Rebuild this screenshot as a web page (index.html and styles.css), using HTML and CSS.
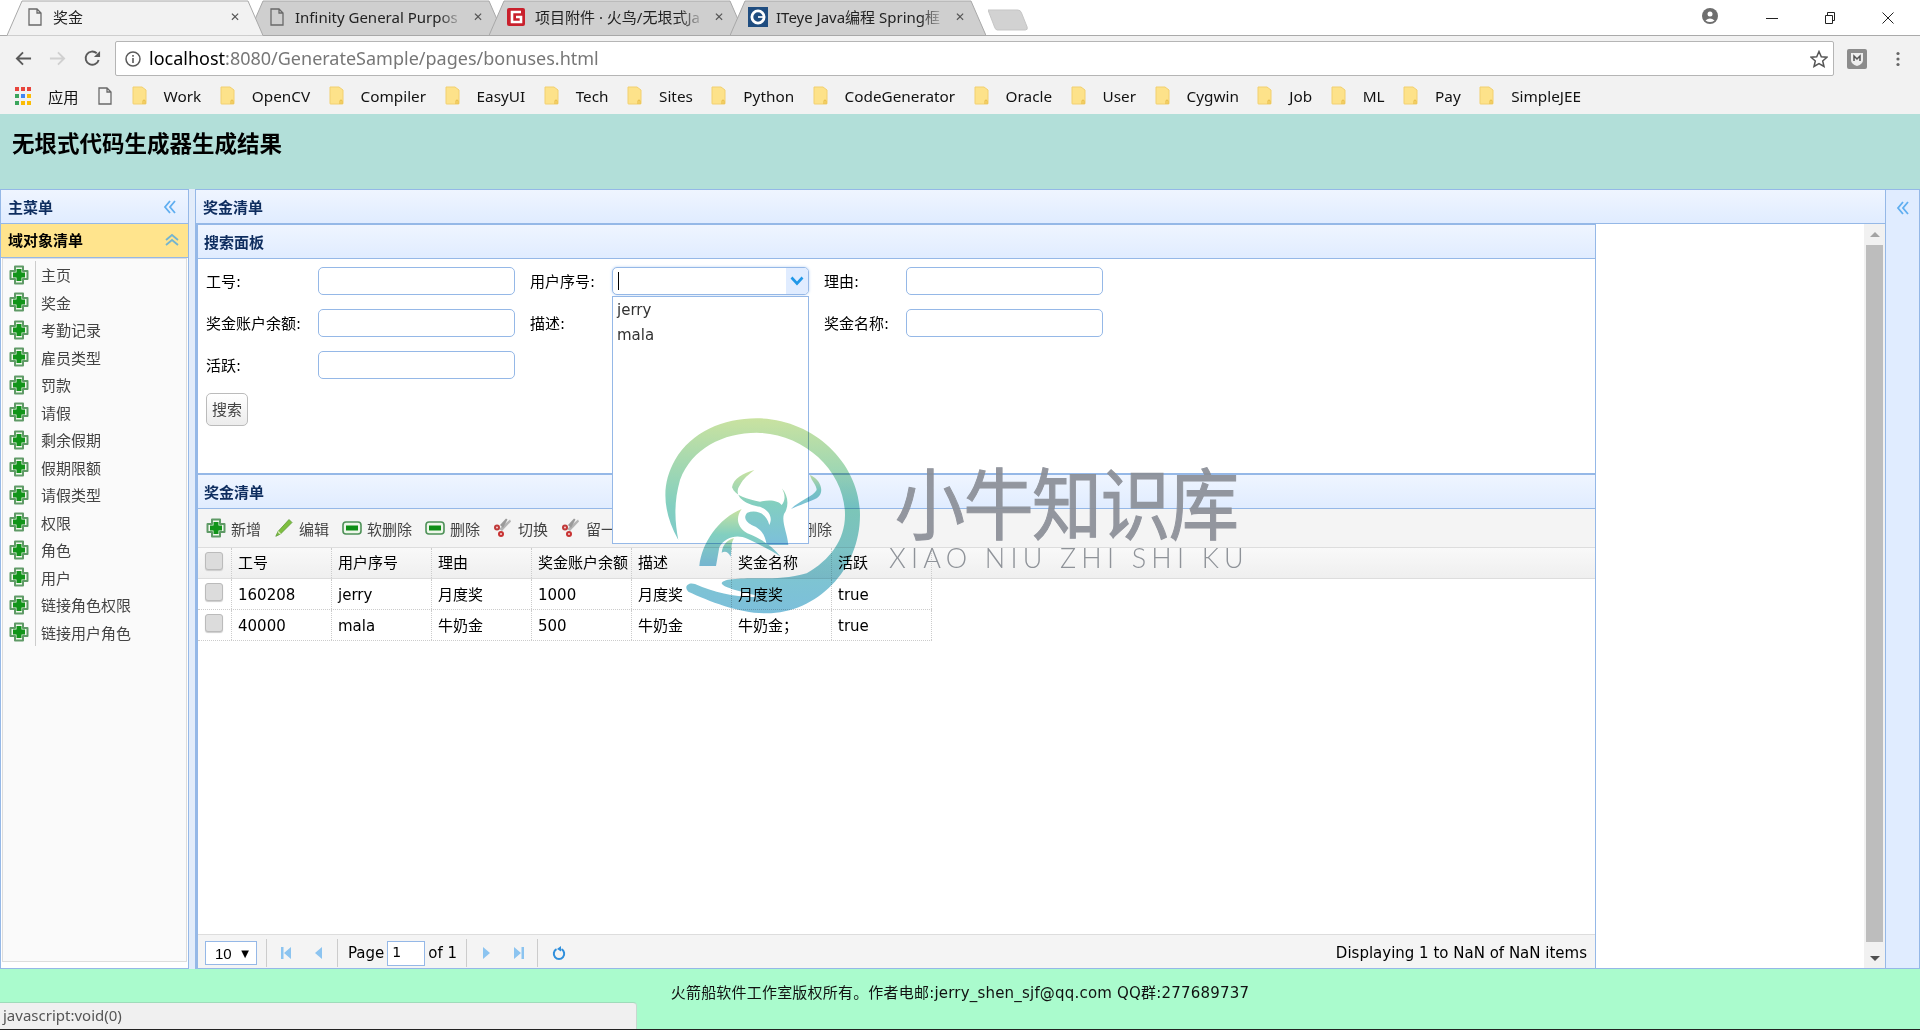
FILE: index.html
```html
<!DOCTYPE html>
<html lang="zh">
<head>
<meta charset="utf-8">
<title>奖金</title>
<link rel="stylesheet" href="styles.css">
</head>
<body>
<svg class="defs" width="0" height="0" aria-hidden="true">
  <defs>
    <symbol id="i-plus" viewBox="0 0 20 20">
      <path d="M6 1.500h8v4.500h4.500v8H14v4.500H6V14H1.500V6H6z" fill="#f2f8ee" stroke="#5f9a66" stroke-width="2" stroke-linejoin="round"/>
      <path d="M10 4v12M4 10h12" stroke="#12941a" stroke-width="5" fill="none"/>
    </symbol>
    <symbol id="i-minus" viewBox="0 0 20 20">
      <rect x="1" y="4" width="18" height="12" rx="3" fill="#eef6ea" stroke="#4e9158" stroke-width="1.600"/>
      <rect x="4" y="7.500" width="12" height="5" fill="#0e8f16"/>
    </symbol>
    <symbol id="i-pencil" viewBox="0 0 20 20">
      <path d="M15 1.500l3 3L6.500 16 1.800 18.300 4 13.500z" fill="#7fbf3f" stroke="#5c9a3a" stroke-width=".8"/>
      <path d="M4 13.500l2.500 2.500" stroke="#d8e8b8" stroke-width="1.500"/>
    </symbol>
    <symbol id="i-scissors" viewBox="0 0 20 20">
      <path d="M6 11L17 1.500l1 2L9 13z" fill="#b4b4b4"/>
      <path d="M7 7l6-6.500 1.500 1L10 10 z" fill="#9a9a9a"/>
      <circle cx="4" cy="9.500" r="3" fill="#c03a3a"/>
      <circle cx="8" cy="16" r="3" fill="#c83232"/>
      <circle cx="4" cy="9.500" r="1" fill="#f4d4d4"/>
      <circle cx="8" cy="16" r="1" fill="#f4d4d4"/>
    </symbol>
    <symbol id="i-page" viewBox="0 0 14 18">
      <path d="M1 1h8l4 4v12H1z M9 1v4h4" fill="none" stroke="#6a6a6a" stroke-width="1.300"/>
    </symbol>
    <symbol id="i-folder" viewBox="0 0 15 19">
      <path d="M1 1h9l4 3v13.500q0 .5-.5.500H1.500q-.5 0-.5-.5z" fill="#fde28a" stroke="#f2d070" stroke-width="1"/>
      <path d="M11 18v-3q0-1 1-1t1 1v3" fill="none" stroke="#e6b93e" stroke-width="1"/>
    </symbol>
    <symbol id="i-dbl-left" viewBox="0 0 14 14">
      <path d="M7 1L2 7l5 6M12 1L7 7l5 6" fill="none" stroke="#5faef0" stroke-width="1.800"/>
    </symbol>
    <symbol id="i-dbl-up" viewBox="0 0 14 14">
      <path d="M1 7l6-5 6 5M1 12l6-5 6 5" fill="none" stroke="#74b4cf" stroke-width="1.800"/>
    </symbol>
  </defs>
</svg>

<div class="tabstrip">
  <div class="tab tab-active">
    <svg class="tab-shape" viewBox="0 0 256 36" preserveAspectRatio="none"><path d="M0 35.500L15 1h226l15 34.500"/></svg>
    <svg class="tab-icon"><use href="#i-page"/></svg>
    <span class="tab-title">奖金</span>
    <span class="tab-close">✕</span>
  </div>
  <div class="tab">
    <svg class="tab-shape" viewBox="0 0 256 36" preserveAspectRatio="none"><path d="M0 35.500L15 1h226l15 34.500z"/></svg>
    <svg class="tab-icon"><use href="#i-page"/></svg>
    <span class="tab-title tab-fade">Infinity General Purpos</span>
    <span class="tab-close">✕</span>
  </div>
  <div class="tab tab-narrow">
    <svg class="tab-shape" viewBox="0 0 256 36" preserveAspectRatio="none"><path d="M0 35.500L15 1h226l15 34.500z"/></svg>
    <svg class="fav" viewBox="0 0 18 18"><rect width="18" height="18" rx="2" fill="#c9202c"/><path d="M14 4H5v10h9V9H9" fill="none" stroke="#fff" stroke-width="2.600"/></svg>
    <span class="tab-title tab-fade">项目附件 · 火鸟/无垠式Ja</span>
    <span class="tab-close">✕</span>
  </div>
  <div class="tab tab-narrow">
    <svg class="tab-shape" viewBox="0 0 256 36" preserveAspectRatio="none"><path d="M0 35.500L15 1h226l15 34.500z"/></svg>
    <svg class="fav fav-wide" viewBox="0 0 18 18"><rect width="18" height="18" fill="#1f4d80"/><circle cx="9" cy="9" r="5.500" fill="none" stroke="#fff" stroke-width="2.500"/><path d="M9 9h6" stroke="#fff" stroke-width="1.500"/></svg>
    <span class="tab-title tab-fade">ITeye Java编程 Spring框</span>
    <span class="tab-close">✕</span>
  </div>
  <svg class="newtab" viewBox="0 0 44 22" preserveAspectRatio="none"><path d="M0 1h32q3 0 4 3l6 14q1 3-2 3H10q-2 0-3-3z" fill="#d2d2d2" stroke="#c4c4c4"/></svg>
  <div class="win">
    <svg class="win-user" viewBox="0 0 16 16"><circle cx="8" cy="8" r="8" fill="#6e6e6e"/><circle cx="8" cy="6" r="2.500" fill="#fff"/><path d="M3.500 12.500q4.500-4 9 0q-4.500 3-9 0z" fill="#fff"/></svg>
    <svg class="win-btn" viewBox="0 0 12 12"><path d="M0 6.500h12" stroke="#222" fill="none"/></svg>
    <svg class="win-btn" viewBox="0 0 12 12"><path d="M1.500 3.500h7v8h-7zM3.500 3.500v-3h7v8h-2" stroke="#222" fill="none"/></svg>
    <svg class="win-btn" viewBox="0 0 12 12"><path d="M.5.500l11 11M11.500.500l-11 11" stroke="#222" fill="none"/></svg>
  </div>
</div>

<div class="toolbar">
  <svg class="nav nav-back" viewBox="0 0 18 18"><path d="M17 9H2M8.500 2.500L2 9l6.500 6.500" fill="none" stroke="#5a5a5a" stroke-width="2"/></svg>
  <svg class="nav nav-fwd" viewBox="0 0 18 18"><path d="M1 9h15M9.500 2.500L16 9l-6.500 6.500" fill="none" stroke="#d0d0d0" stroke-width="2"/></svg>
  <svg class="nav nav-reload" viewBox="0 0 18 18"><path d="M15.500 10.500A7 7 0 1 1 13.500 3.500" fill="none" stroke="#5a5a5a" stroke-width="2"/><path d="M10.500 7.500H17V1z" fill="#5a5a5a"/></svg>
  <div class="omnibox">
    <svg class="info" viewBox="0 0 16 16"><circle cx="8" cy="8" r="7" fill="none" stroke="#5a5a5a" stroke-width="1.500"/><path d="M8 7v5M8 4v1.800" stroke="#5a5a5a" stroke-width="1.600"/></svg>
    <span class="url"><b class="host">localhost</b>:8080/GenerateSample/pages/bonuses.html</span>
    <svg class="star" viewBox="0 0 18 18"><path d="M9 1.500l2.300 5.200 5.700.5-4.300 3.800 1.300 5.500L9 13.600l-5 2.900 1.300-5.500L1 7.200l5.700-.5z" fill="none" stroke="#555" stroke-width="1.500"/></svg>
  </div>
  <svg class="ext" viewBox="0 0 20 20"><rect width="20" height="20" rx="2" fill="#8c8c8c"/><path d="M4 4h12v7q0 4-6 6-6-2-6-6z" fill="#eee"/><path d="M7 12V7l3 3 3-3v5" fill="none" stroke="#555" stroke-width="1.500"/></svg>
  <svg class="menu-dots" viewBox="0 0 4 16"><circle cx="2" cy="2.500" r="1.600"/><circle cx="2" cy="8" r="1.600"/><circle cx="2" cy="13.500" r="1.600"/></svg>
</div>

<div class="bookmarks">
  <svg class="apps" viewBox="0 0 16 18">
    <rect x="0" y="0" width="4" height="4" fill="#e8453c"/><rect x="6" y="0" width="4" height="4" fill="#e8453c"/><rect x="12" y="0" width="4" height="4" fill="#e8453c"/>
    <rect x="0" y="7" width="4" height="4" fill="#3ba55c"/><rect x="6" y="7" width="4" height="4" fill="#4285f4"/><rect x="12" y="7" width="4" height="4" fill="#fbbc05"/>
    <rect x="0" y="14" width="4" height="4" fill="#3ba55c"/><rect x="6" y="14" width="4" height="4" fill="#fbbc05"/><rect x="12" y="14" width="4" height="4" fill="#fbbc05"/>
  </svg>
  <span class="bm-apps">应用</span>
  <svg class="bm-page"><use href="#i-page"/></svg>
  <span class="bm"><svg class="bm-folder"><use href="#i-folder"/></svg>Work</span>
  <span class="bm"><svg class="bm-folder"><use href="#i-folder"/></svg>OpenCV</span>
  <span class="bm"><svg class="bm-folder"><use href="#i-folder"/></svg>Compiler</span>
  <span class="bm"><svg class="bm-folder"><use href="#i-folder"/></svg>EasyUI</span>
  <span class="bm"><svg class="bm-folder"><use href="#i-folder"/></svg>Tech</span>
  <span class="bm"><svg class="bm-folder"><use href="#i-folder"/></svg>Sites</span>
  <span class="bm"><svg class="bm-folder"><use href="#i-folder"/></svg>Python</span>
  <span class="bm"><svg class="bm-folder"><use href="#i-folder"/></svg>CodeGenerator</span>
  <span class="bm"><svg class="bm-folder"><use href="#i-folder"/></svg>Oracle</span>
  <span class="bm"><svg class="bm-folder"><use href="#i-folder"/></svg>User</span>
  <span class="bm"><svg class="bm-folder"><use href="#i-folder"/></svg>Cygwin</span>
  <span class="bm"><svg class="bm-folder"><use href="#i-folder"/></svg>Job</span>
  <span class="bm"><svg class="bm-folder"><use href="#i-folder"/></svg>ML</span>
  <span class="bm"><svg class="bm-folder"><use href="#i-folder"/></svg>Pay</span>
  <span class="bm"><svg class="bm-folder"><use href="#i-folder"/></svg>SimpleJEE</span>
</div>

<header class="app-header"><h1>无垠式代码生成器生成结果</h1></header>

<div class="layout">
  <aside class="west">
    <div class="panel-head west-head"><span class="title">主菜单</span><svg class="chev"><use href="#i-dbl-left"/></svg></div>
    <div class="panel-head gold-head"><span class="title">域对象清单</span><svg class="chev-up"><use href="#i-dbl-up"/></svg></div>
    <div class="west-body">
      <ul class="tree">
        <li><span class="tree-ico"><svg class="ico"><use href="#i-plus"/></svg></span>主页</li>
        <li><span class="tree-ico"><svg class="ico"><use href="#i-plus"/></svg></span>奖金</li>
        <li><span class="tree-ico"><svg class="ico"><use href="#i-plus"/></svg></span>考勤记录</li>
        <li><span class="tree-ico"><svg class="ico"><use href="#i-plus"/></svg></span>雇员类型</li>
        <li><span class="tree-ico"><svg class="ico"><use href="#i-plus"/></svg></span>罚款</li>
        <li><span class="tree-ico"><svg class="ico"><use href="#i-plus"/></svg></span>请假</li>
        <li><span class="tree-ico"><svg class="ico"><use href="#i-plus"/></svg></span>剩余假期</li>
        <li><span class="tree-ico"><svg class="ico"><use href="#i-plus"/></svg></span>假期限额</li>
        <li><span class="tree-ico"><svg class="ico"><use href="#i-plus"/></svg></span>请假类型</li>
        <li><span class="tree-ico"><svg class="ico"><use href="#i-plus"/></svg></span>权限</li>
        <li><span class="tree-ico"><svg class="ico"><use href="#i-plus"/></svg></span>角色</li>
        <li><span class="tree-ico"><svg class="ico"><use href="#i-plus"/></svg></span>用户</li>
        <li><span class="tree-ico"><svg class="ico"><use href="#i-plus"/></svg></span>链接角色权限</li>
        <li><span class="tree-ico"><svg class="ico"><use href="#i-plus"/></svg></span>链接用户角色</li>
      </ul>
    </div>
  </aside>

  <main class="center">
    <div class="panel-head center-head"><span class="title">奖金清单</span></div>
    <div class="center-body">
      <div class="main-col">
        <section class="search">
          <div class="panel-head sub-head"><span class="title">搜索面板</span></div>
          <form class="search-form">
            <div class="form-grid">
              <label class="col-1">工号:</label><input class="field" type="text">
              <label class="col-2">用户序号:</label>
              <div class="combo">
                <span class="caret"></span>
                <span class="combo-arrow"><svg class="combo-chev" viewBox="0 0 14 10"><path d="M1.500 1.500L7 7.500l5.500-6" fill="none" stroke="#2098e8" stroke-width="2.600"/></svg></span>
                <ul class="dropdown"><li>jerry</li><li>mala</li></ul>
              </div>
              <label class="col-3">理由:</label><input class="field" type="text">
              <label class="col-1">奖金账户余额:</label><input class="field" type="text">
              <label class="col-2">描述:</label><span></span>
              <label class="col-3">奖金名称:</label><input class="field" type="text">
              <label class="col-1">活跃:</label><input class="field" type="text">
            </div>
            <button class="search-btn" type="button">搜索</button>
          </form>
        </section>
        <section class="list">
          <div class="panel-head sub-head"><span class="title">奖金清单</span></div>
          <div class="grid-tools">
            <span class="tool"><svg class="ico"><use href="#i-plus"/></svg>新增</span>
            <span class="tool"><svg class="ico"><use href="#i-pencil"/></svg>编辑</span>
            <span class="tool"><svg class="ico"><use href="#i-minus"/></svg>软删除</span>
            <span class="tool"><svg class="ico"><use href="#i-minus"/></svg>删除</span>
            <span class="tool"><svg class="ico"><use href="#i-scissors"/></svg>切换</span>
            <span class="tool"><svg class="ico"><use href="#i-scissors"/></svg>留一</span>
            <span class="tool tool-far"><svg class="ico"><use href="#i-minus"/></svg>删除</span>
          </div>
          <div class="grid-head">
            <div class="cell cell-check"><span class="check"></span></div>
            <div class="cell">工号</div><div class="cell">用户序号</div><div class="cell">理由</div><div class="cell">奖金账户余额</div><div class="cell">描述</div><div class="cell">奖金名称</div><div class="cell">活跃</div>
          </div>
          <div class="grid-body">
            <div class="grid-row">
              <div class="cell cell-check"><span class="check"></span></div>
              <div class="cell">160208</div><div class="cell">jerry</div><div class="cell">月度奖</div><div class="cell">1000</div><div class="cell">月度奖</div><div class="cell">月度奖</div><div class="cell">true</div>
            </div>
            <div class="grid-row">
              <div class="cell cell-check"><span class="check"></span></div>
              <div class="cell">40000</div><div class="cell">mala</div><div class="cell">牛奶金</div><div class="cell">500</div><div class="cell">牛奶金</div><div class="cell">牛奶金；</div><div class="cell">true</div>
            </div>
          </div>
          <div class="pager">
            <div class="page-size"><span>10</span><span class="tri">▼</span></div>
            <i class="sep"></i>
            <svg class="pg" viewBox="0 0 12 14"><path d="M1 1h2.500v12H1zM11 1v12L4 7z" fill="#8cc4f0"/></svg>
            <svg class="pg" viewBox="0 0 12 14"><path d="M9 1v12L2 7z" fill="#8cc4f0"/></svg>
            <i class="sep"></i>
            <span class="pg-label">Page</span><span class="pg-input">1</span><span class="pg-of">of 1</span>
            <i class="sep"></i>
            <svg class="pg" viewBox="0 0 12 14"><path d="M3 1v12l7-6z" fill="#8cc4f0"/></svg>
            <svg class="pg" viewBox="0 0 12 14"><path d="M1 1v12l7-6zM8.500 1H11v12H8.500z" fill="#8cc4f0"/></svg>
            <i class="sep"></i>
            <svg class="pg pg-refresh" viewBox="0 0 14 14"><path d="M4.500 3.200A5.200 5.200 0 1 0 9.500 3.200" fill="none" stroke="#2f8fdc" stroke-width="2"/><path d="M6 0v5.500L2 3z" fill="#2f8fdc" transform="translate(3 0)"/></svg>
            <span class="pg-info">Displaying 1 to NaN of NaN items</span>
          </div>
        </section>
      </div>
      <div class="blank"></div>
      <div class="scrollbar">
        <span class="sb-up"></span>
        <span class="sb-thumb"></span>
        <span class="sb-down"></span>
      </div>
    </div>
  </main>

  <aside class="east"><svg class="chev-east"><use href="#i-dbl-left"/></svg></aside>
</div>

<footer class="app-footer">火箭船软件工作室版权所有。作者电邮:jerry_shen_sjf@qq.com QQ群:277689737</footer>

<div class="status">javascript:void(0)</div>

<div class="watermark">
  <svg class="wm-logo" viewBox="0 0 660 630">
    <defs>
      <linearGradient id="wm" x1="0" y1="0" x2="0" y2="1">
        <stop offset="0" stop-color="#c9e2a0"/>
        <stop offset=".45" stop-color="#82cfc0"/>
        <stop offset="1" stop-color="#7cbfdb"/>
      </linearGradient>
    </defs>
    <g fill="url(#wm)">
      <path d="M55 390C5 300 5 220 45 150C95 65 190 25 290 25C460 25 600 160 600 315C600 480 470 610 320 610C240 610 150 575 85 545C70 530 85 515 105 522C170 550 240 565 300 560C250 545 190 535 185 520C190 505 250 505 300 505C340 505 390 505 440 490C510 450 555 390 555 315C555 180 430 70 290 68C190 68 95 115 60 210C40 280 45 340 55 390Z"/>
      <path d="M283 180C250 190 220 205 216 232C225 258 262 268 300 275C330 268 355 272 365 285C378 270 375 250 365 235C385 255 388 290 372 312C364 335 382 370 385 405L320 405C315 370 300 355 275 345C255 335 250 320 262 308C285 300 318 305 328 345C340 320 325 300 300 290C262 285 215 260 240 225C250 205 265 195 283 180Z"/>
      <path d="M118 468C125 400 175 325 245 297C228 320 228 350 262 370C300 385 335 405 362 440C330 418 290 400 262 386C232 372 195 380 178 412L168 468Z"/>
      <path d="M450 195C485 210 495 250 470 265C450 275 420 285 393 297C420 270 460 260 470 240C470 225 455 215 450 195Z"/>
      <path d="M185 428C188 402 205 388 222 385C212 400 216 415 212 440C205 425 195 422 185 428Z"/>
    </g>
  </svg>
  <span class="wm-cn">小牛知识库</span>
  <span class="wm-en">XIAO NIU ZHI SHI KU</span>
</div>
</body>
</html>
```

FILE: styles.css
```css
* { box-sizing: border-box; }
html, body { margin: 0; padding: 0; }
body {
  width: 1920px;
  height: 1030px;
  overflow: hidden;
  position: relative;
  display: flex;
  flex-direction: column;
  background: #fff;
  font-family: "DejaVu Sans", "Noto Sans CJK SC", sans-serif;
  font-size: 15px;
  color: #000;
}
.defs { position: absolute; }

/* browser chrome */
.tabstrip {
  height: 36px;
  flex: none;
  display: flex;
  padding-left: 7px;
  border-bottom: 1px solid #aaa;
  font-family: "Noto Sans", "Noto Sans CJK SC", sans-serif;
  font-size: 15px;
  position: relative;
}
.tab {
  width: 256px;
  height: 36px;
  margin-right: -15px;
  padding: 0 20px 3px 22px;
  display: flex;
  align-items: center;
  position: relative;
  flex: none;
}
.tab-shape { position: absolute; left: 0; top: 0; width: 100%; height: 100%; z-index: 0; }
.tab-shape path { fill: #cfcfcf; stroke: #a8a8a8; stroke-width: 1; }
.tab-active { z-index: 2; padding: 0 22px 3px 21px; }
.tab-active .tab-shape path { fill: #f2f2f2; }
.tab-narrow { padding-left: 18px; }
.tab-icon, .tab-title, .tab-close, .fav { position: relative; z-index: 1; }
.tab-icon { width: 14px; height: 18px; margin-right: 11px; flex: none; }
.fav { width: 18px; height: 18px; margin-right: 10px; flex: none; }
.fav-wide { width: 20px; height: 20px; margin-right: 8px; }
.tab-title { flex: 1; white-space: nowrap; overflow: hidden; color: #222; }
.tab-fade { -webkit-mask-image: linear-gradient(90deg, #000 85%, transparent); mask-image: linear-gradient(90deg, #000 85%, transparent); }
.tab-close { width: 12px; margin-left: 8px; font-size: 12px; color: #555; flex: none; text-align: center; }
.newtab { width: 41px; height: 22px; margin: 9px 0 0 17px; flex: none; }
.win { margin-left: auto; display: flex; align-items: flex-start; padding: 8px 26px 0 0; }
.win-user { width: 16px; height: 16px; margin-right: 48px; }
.win-btn { width: 12px; height: 12px; margin: 4px 46px 0 0; }
.win-btn:last-child { margin-right: 0; }

.toolbar {
  height: 41px;
  flex: none;
  background: #f2f2f2;
  display: flex;
  align-items: center;
  padding: 4px 0 0 15px;
}
.nav { width: 17px; height: 17px; flex: none; }
.nav-back { margin-right: 17px; }
.nav-fwd { margin-right: 18px; }
.nav-reload { margin-right: 14px; }
.omnibox {
  width: 1719px;
  height: 35px;
  background: #fff;
  border: 1px solid #b5b5b5;
  border-radius: 2px;
  display: flex;
  align-items: center;
  padding: 0 0 2px 9px;
  font-family: "Noto Sans", sans-serif;
  font-size: 18px;
  flex: none;
}
.info { width: 16px; height: 16px; margin: 2px 8px 0 0; flex: none; }
.url { color: #777; white-space: nowrap; flex: 1; }
.host { font-weight: 400; color: #000; }
.star { width: 18px; height: 18px; margin: 2px 5px 0 0; }
.ext { width: 20px; height: 20px; margin-left: 13px; flex: none; }
.menu-dots { width: 4px; height: 16px; margin-left: 29px; flex: none; fill: #666; }

.bookmarks {
  height: 37px;
  flex: none;
  background: #f2f2f2;
  display: flex;
  align-items: center;
  padding-left: 15px;
  font-family: "Noto Sans", "Noto Sans CJK SC", sans-serif;
  font-size: 15.3px;
  color: #111;
  white-space: nowrap;
}
.apps { width: 16px; height: 18px; margin-right: 17px; flex: none; }
.bm-apps { margin-right: 19px; }
.bm-page { width: 14px; height: 18px; margin-right: 20px; flex: none; }
.bm { display: flex; align-items: center; margin-right: 18.500px; }
.bm-folder { width: 15px; height: 19px; margin-right: 17px; flex: none; }

/* app */
.app-header { height: 75px; flex: none; background: #b2dfd9; padding: 15px 12px 0; }
.app-header h1 { margin: 0; font-size: 22.5px; line-height: 30px; font-weight: 700; }

.layout { height: 780px; flex: none; display: flex; background: #e2ecfa; }
.panel-head {
  height: 35px;
  flex: none;
  display: flex;
  align-items: center;
  justify-content: space-between;
  background: linear-gradient(#eff5ff, #e0ecff);
  border-bottom: 1px solid #95b8e7;
}
.title { font-weight: 700; font-size: 15px; color: #0e2d5f; }

.west {
  width: 189px;
  flex: none;
  display: flex;
  flex-direction: column;
  background: #fff;
  border: 1px solid #95b8e7;
  margin-right: 6px;
}
.west-head { height: 34px; padding: 0 7px; }
.chev { width: 14px; height: 14px; margin-right: 4px; }
.gold-head { height: 34px; background: #ffe48d; padding: 0 7px 2px; }
.gold-head .title { color: #000; }
.chev-up { width: 14px; height: 14px; margin-right: 2px; }
.west-body { flex: 1; padding: 0 1px 6px 1px; display: flex; }
.tree {
  flex: 1;
  margin: 0;
  padding: 2px 0 0;
  list-style: none;
  background: #fafafa;
  border: 1px solid #ddd;
  color: #444;
}
.tree li { height: 27.5px; display: flex; align-items: center; }
.tree-ico {
  width: 33px;
  height: 100%;
  border-right: 1px solid #ccc;
  margin-right: 5px;
  padding-left: 6px;
  display: flex;
  align-items: center;
  flex: none;
}
.ico { width: 20px; height: 20px; flex: none; }

.center {
  flex: 1;
  min-width: 0;
  display: flex;
  flex-direction: column;
  background: #fff;
  border: 1px solid #95b8e7;
  border-right: 0;
}
.center-head { height: 34px; padding: 0 7px; }
.center-body { flex: 1; min-height: 0; display: flex; }
.main-col { width: 1400px; flex: none; display: flex; flex-direction: column; }
.blank { flex: 1; }

.search { height: 249px; flex: none; display: flex; flex-direction: column; border-left: 2px solid #95b8e7; border-right: 1px solid #95b8e7; border-top: 1px solid #95b8e7; }
.sub-head { height: 34px; padding: 0 6px; }
.search-form { padding: 8px 8px 0; }
.form-grid {
  display: grid;
  grid-template-columns: 112px 197px 15px 82px 197px 15px 82px 197px;
  row-gap: 14px;
  grid-auto-rows: 28px;
}
.form-grid label { line-height: 30px; }
.col-1 { grid-column: 1; }
.col-2 { grid-column: 4; }
.col-3 { grid-column: 7; }
.field {
  width: 197px;
  height: 28px;
  margin: 0;
  padding: 0 6px;
  border: 1px solid #95b8e7;
  border-radius: 5px;
  background: #fff;
  outline: 0;
}
.combo {
  position: relative;
  height: 28px;
  border: 1px solid #95b8e7;
  border-radius: 5px;
  box-shadow: 0 0 3px 0 #bcd4f4;
  background: #fff;
  display: flex;
}
.caret { width: 1px; height: 18px; background: #000; margin: 4px 0 0 5px; }
.combo-arrow {
  width: 22px;
  height: 26px;
  margin-left: auto;
  background: #e0ecff;
  border-radius: 0 4px 4px 0;
  display: flex;
  align-items: center;
  justify-content: center;
}
.combo-chev { width: 14px; height: 10px; }
.dropdown {
  position: absolute;
  left: -1px;
  top: 28px;
  width: 197px;
  height: 248px;
  margin: 0;
  padding: 1px 0 0;
  list-style: none;
  background: #fff;
  border: 1px solid #95b8e7;
  z-index: 5;
  color: #333;
}
.dropdown li { height: 25px; line-height: 25px; padding-left: 4px; }
.search-btn {
  display: block;
  width: 42px;
  height: 33px;
  margin: 14px 0 0;
  padding: 0 0 2px;
  font: inherit;
  color: #444;
  background: linear-gradient(#fff, #ececec);
  border: 1px solid #bbb;
  border-radius: 5px;
}

.list { flex: 1; min-height: 0; display: flex; flex-direction: column; border-left: 2px solid #95b8e7; border-right: 1px solid #95b8e7; border-top: 2px solid #95b8e7; }
.grid-tools {
  height: 39px;
  flex: none;
  background: #f4f4f4;
  border-bottom: 1px solid #ddd;
  display: flex;
  align-items: center;
  padding-left: 8px;
  gap: 13px;
  color: #444;
}
.tool { display: flex; align-items: center; gap: 5px; white-space: nowrap; }
.tool-far { margin-left: 148px; }
.grid-head, .grid-row { display: grid; grid-template-columns: 34px repeat(7, 100px); }
.grid-head { height: 31px; flex: none; background: linear-gradient(#f9f9f9, #efefef); border-bottom: 1px solid #ddd; }
.grid-row { width: 734px; height: 31px; border-bottom: 1px dotted #ccc; }
.grid-body { flex: 1; min-height: 0; }
.cell { border-right: 1px dotted #ccc; padding-left: 6px; line-height: 30px; white-space: nowrap; overflow: hidden; color: #000; }
.grid-row .cell { line-height: 32px; }
.cell-check { padding: 4px 0 0 7px; line-height: 0; }
.grid-row .cell-check { line-height: 0; }
.check { display: block; width: 18px; height: 18px; background: #dcdcdc; border: 1px solid #bbb; border-radius: 3px; box-shadow: 0 1px 1px #ccc; }

.pager {
  height: 34px;
  flex: none;
  background: #f4f4f4;
  border-top: 1px solid #ddd;
  display: flex;
  align-items: center;
  padding: 3px 8px 0 7px;
}
.page-size { width: 52px; height: 24px; background: #fff; border: 1px solid #95b8e7; display: flex; align-items: center; justify-content: space-between; padding: 0 7px 0 9px; font-family: "Liberation Sans", sans-serif; font-size: 15px; }
.tri { font-size: 10px; font-family: "DejaVu Sans", sans-serif; }
.sep { width: 1px; height: 28px; background: #ccc; flex: none; margin: 0 9px; }
.pg { width: 12px; height: 14px; margin: 0 3px 0 4px; flex: none; }
.pg + .pg { margin-left: 18px; }
.pg-refresh { width: 14px; height: 14px; margin: 0 0 0 5px; }
.pg-label { margin-left: 1px; }
.pg-input { width: 38px; height: 25px; margin: 0 3px 0 3px; border: 1px solid #95b8e7; background: #fff; padding-left: 4px; line-height: 21px; font-size: 14px; flex: none; }
.pg-of { white-space: nowrap; }
.pg-info { margin-left: auto; white-space: nowrap; font-size: 15px; }

.scrollbar { width: 21px; flex: none; background: #f1f1f1; display: flex; flex-direction: column; align-items: center; }
.sb-up { width: 0; height: 0; margin: 8px 0 8px; border: 5px solid transparent; border-top: 0; border-bottom: 5px solid #a3a3a3; }
.sb-thumb { width: 17px; flex: 1; background: #bdbdbd; }
.sb-down { width: 0; height: 0; margin: 14px 0 7px; border: 5px solid transparent; border-bottom: 0; border-top: 5px solid #505050; }

.east { width: 35px; flex: none; background: #e0ecff; border: 1px solid #95b8e7; display: flex; justify-content: center; padding-top: 11px; }
.chev-east { width: 14px; height: 14px; }

.app-footer {
  flex: 1;
  background: #aafbcd;
  border-bottom: 1px solid #222;
  text-align: center;
  padding-top: 13px;
  line-height: 22px;
  letter-spacing: .2px;
  color: #111;
}
.status {
  position: absolute;
  left: 0;
  bottom: 1px;
  width: 637px;
  height: 27px;
  background: #f0f0f0;
  border-top: 1px solid #9fdcba;
  border-right: 1px solid #c8d8d0;
  border-top-right-radius: 4px;
  padding-left: 3px;
  line-height: 25px;
  font-family: "Noto Sans", sans-serif;
  font-size: 15px;
  color: #555;
}

/* watermark */
.watermark { position: absolute; left: 0; top: 0; width: 0; height: 0; }
.wm-logo { position: absolute; left: 660px; top: 410px; width: 220px; height: 210px; mix-blend-mode: multiply; z-index: 10; }
.wm-cn { position: absolute; left: 895px; top: 462px; z-index: 10; font-family: "Noto Sans CJK SC", sans-serif; font-weight: 400; font-size: 70px; line-height: 76px; letter-spacing: -1.500px; white-space: nowrap; color: #8b8f97; -webkit-text-stroke: 1px #8b8f97; opacity: .92; transform: scaleY(1.12); }
.wm-en { position: absolute; left: 889px; top: 540px; z-index: 10; font-family: Lato, sans-serif; font-weight: 300; font-size: 27px; line-height: 36px; letter-spacing: 5.200px; white-space: nowrap; color: #8f9399; }
```
